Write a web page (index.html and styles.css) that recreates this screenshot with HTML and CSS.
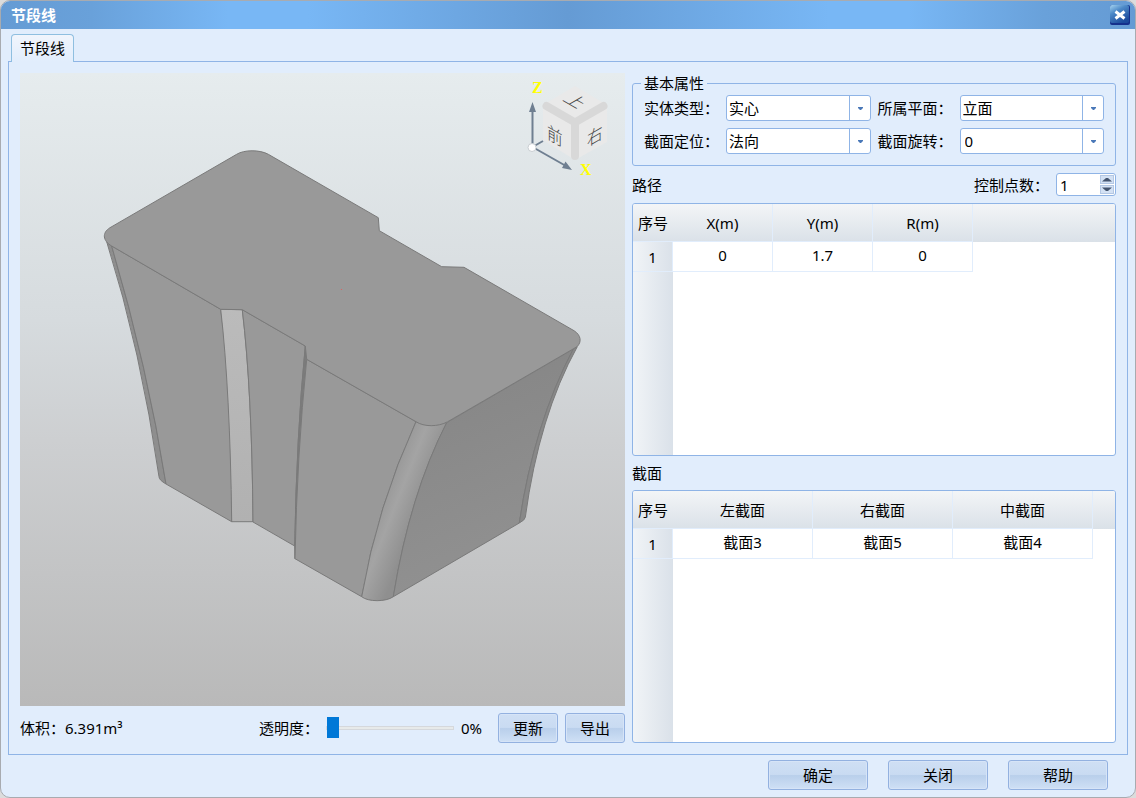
FILE: index.html
```html
<!DOCTYPE html>
<html lang="zh-CN">
<head>
<meta charset="utf-8">
<title>节段线</title>
<link rel="stylesheet" href="styles.css">
</head>
<body>
<main class="window">
  <header class="titlebar">
    <h1 class="title">节段线</h1>
    <button class="close" type="button" aria-label="关闭窗口">
      <svg viewBox="0 0 20 20" width="20" height="20" aria-hidden="true">
        <defs>
          <linearGradient id="closeFill" x1="0" y1="0" x2="0.6" y2="1">
            <stop offset="0" stop-color="#a5d3f0"/>
            <stop offset="0.4" stop-color="#4d8ac8"/>
            <stop offset="1" stop-color="#1c4a9c"/>
          </linearGradient>
        </defs>
        <rect width="20" height="20" rx="2" fill="#15308c"/>
        <rect width="19" height="18" rx="2" fill="url(#closeFill)"/>
        <path d="M5.500 6.500L14.500 13.500M14.500 6.500L5.500 13.500" stroke="#fff" stroke-width="3"/>
      </svg>
    </button>
  </header>

  <div class="tabs" role="tablist">
    <button class="tab" type="button" role="tab" aria-selected="true">节段线</button>
  </div>

  <section class="panel">
    <div class="preview">
      <div class="viewport">
        <svg class="scene" viewBox="20 73 605 633" role="img" aria-label="三维模型">
          <defs>
            <linearGradient id="roll" gradientUnits="userSpaceOnUse" x1="378" y1="505" x2="416" y2="520">
              <stop offset="0" stop-color="#979797"/>
              <stop offset="0.4" stop-color="#a4a4a4"/>
              <stop offset="1" stop-color="#8f8f8f"/>
            </linearGradient>
            <linearGradient id="side" x1="0.300" y1="0" x2="0.600" y2="1">
              <stop offset="0" stop-color="#858585"/>
              <stop offset="1" stop-color="#929292"/>
            </linearGradient>
            <linearGradient id="strip" x1="0" y1="0" x2="0" y2="1">
              <stop offset="0" stop-color="#bbbbbb"/>
              <stop offset="1" stop-color="#b1b1b1"/>
            </linearGradient>
          </defs>
          <g stroke="#7a7a7a" stroke-width="1" stroke-linejoin="round">
            <path fill="#8e8e8e" d="M106.700 241.700Q141 351 159 476.700Q159 480 166 484Q148 369 111.700 246Z"/>
            <path fill="#999" d="M111.700 246Q148 369 166 484L231.700 521.700Q232 390 220.700 309.300Z"/>
            <path fill="url(#strip)" d="M220.700 309.300Q230 390 231.700 521.700H253Q252 390 242.300 309.700Z"/>
            <path fill="#999" d="M242.300 309.700Q252 390 253 522L294.700 546Q296.600 434 305.300 346Z"/>
            <path fill="#7c7c7c" d="M305.300 346Q296.600 434 294.700 546L295 558.700Q297 455 306.700 359.300Z"/>
            <path fill="#999" d="M306.700 359.300Q297 455 295 558.700L361.700 596.700Q377 507 416 421.700Z"/>
            <path fill="url(#roll)" d="M416 421.700Q377 507 361.700 596.700C368 602 386 602 393.300 596.700Q410 494 446.700 422.700Z"/>
            <path fill="url(#side)" d="M446.700 422.700Q410 494 393.300 596.700L519.300 523Q534 424 573.300 349Z"/>
            <path fill="#888" d="M573.300 349Q534 424 519.300 523Q525 520 525.300 517.300Q539 416 577.300 346.700Z"/>
            <path fill="#999" d="M111.700 246C103 241 101.500 233 110 227.700L236.700 154.300C244 149.600 260 149.600 268.300 154.300L378.300 217.700L379.300 230.700L441.700 266.700L464 267.300L574 330.700C581 335 582 342 577 346.700L447.700 421.700C438 427 424 427 416 421.700L306.700 359.300L305.300 346L242.300 309.700L220.700 309.300Z"/>
          </g>
          <path d="M341 289h1v1h-1z" fill="#e06060"/>

          <g class="cube">
            <path fill="#e9e9e9" d="M575 86L607 105V142L575 160L543 140V105Z"/>
            <path d="M546.500 106L575 122.500L603.500 106M575 122.500V156" fill="none" stroke="#d8d8d8" stroke-width="8" stroke-linecap="round"/>
            <text class="face" transform="matrix(0.870 0.500 -0.870 0.500 562 100)">上</text>
            <text class="face" transform="matrix(0.870 0.500 0 1 547 138)">前</text>
            <text class="face" transform="matrix(0.870 -0.500 0 1 587 147)">右</text>
          </g>
          <g stroke="#6f7f91" stroke-width="2" fill="#6f7f91">
            <path d="M532.500 147V110M532.500 147L566 166M532.500 147L543 141"/>
            <path stroke="none" d="M532.500 102L529 112H536ZM572 170L562 168L565.500 161.500Z"/>
          </g>
          <circle cx="532" cy="147.500" r="4" fill="#fff" stroke="#c9ced2"/>
          <text class="axis" x="532" y="93">Z</text>
          <text class="axis" x="580" y="175">X</text>
        </svg>
      </div>
      <div class="status">
        <output class="volume">体积：6.391m³</output>
        <label for="opacity">透明度：</label>
        <input class="slider" id="opacity" type="range" min="0" max="100" value="0">
        <output class="percent" for="opacity">0%</output>
        <button class="btn btn-small" type="button">更新</button>
        <button class="btn btn-small" type="button">导出</button>
      </div>
    </div>

    <div class="props">
      <fieldset class="group">
        <legend>基本属性</legend>
        <div class="fields">
          <div class="field"><label for="type">实体类型：</label><select id="type"><option>实心</option></select></div>
          <div class="field"><label for="plane">所属平面：</label><select id="plane"><option>立面</option></select></div>
          <div class="field"><label for="anchor">截面定位：</label><select id="anchor"><option>法向</option></select></div>
          <div class="field"><label for="rotate">截面旋转：</label><select class="numeric" id="rotate"><option>0</option></select></div>
        </div>
      </fieldset>

      <div class="path-bar">
        <h2 class="caption">路径</h2>
        <label for="points">控制点数：</label>
        <div class="spin">
          <input id="points" type="number" value="1">
          <div class="steps">
            <button type="button" aria-label="增加"><svg viewBox="0 0 12 7" aria-hidden="true"><path d="M1 5.500L5 2H7L11 5.500Z"/></svg></button>
            <button type="button" aria-label="减少"><svg viewBox="0 0 12 7" aria-hidden="true"><path d="M1 1.500L5 5H7L11 1.500Z"/></svg></button>
          </div>
        </div>
      </div>

      <div class="grid-box">
        <table class="grid grid-path">
          <colgroup><col class="c-index"><col class="c-data"><col class="c-data"><col class="c-data"><col></colgroup>
          <thead><tr><th>序号</th><th>X(m)</th><th>Y(m)</th><th>R(m)</th><td class="rest"></td></tr></thead>
          <tbody><tr><th>1</th><td>0</td><td>1.7</td><td>0</td><td class="rest"></td></tr></tbody>
        </table>
      </div>

      <h2 class="caption caption-section">截面</h2>

      <div class="grid-box">
        <table class="grid grid-section">
          <colgroup><col class="c-index"><col class="c-data"><col class="c-data"><col class="c-data"><col></colgroup>
          <thead><tr><th>序号</th><th>左截面</th><th>右截面</th><th>中截面</th><td class="rest"></td></tr></thead>
          <tbody><tr><th>1</th><td>截面3</td><td>截面5</td><td>截面4</td><td class="rest"></td></tr></tbody>
        </table>
      </div>
    </div>
  </section>

  <footer class="actions">
    <button class="btn" type="button">确定</button>
    <button class="btn" type="button">关闭</button>
    <button class="btn" type="button">帮助</button>
  </footer>
</main>
</body>
</html>
```

FILE: styles.css
```css
:root {
  --line: #8fb4e6;
  --soft: #e1edfc;
  --bg: #e1edfc;
}

* {
  box-sizing: border-box;
}

body {
  margin: 0;
  background: #dcdcdc;
}

body,
button,
input,
select {
  font: 15px/20px "Noto Sans", "Noto Sans CJK SC", sans-serif;
  color: #000;
}

button {
  padding: 0;
}

h1,
h2 {
  margin: 0;
  font-size: 15px;
  font-weight: 400;
}

.window {
  display: flex;
  flex-direction: column;
  min-height: 100vh;
  border: 1px solid #a8abb0;
  border-radius: 10px;
  background: var(--bg);
  overflow: hidden;
}

.titlebar {
  display: flex;
  align-items: center;
  justify-content: space-between;
  height: 28px;
  padding: 0 5px 0 10px;
  background: linear-gradient(90deg, #659bd4 0%, #69a1da 8%, #78b7f5 20%, #78b7f5 27%, #659bd4 50%, #78b7f5 73%, #78b7f5 80%, #69a1da 92%, #659bd4 100%);
}

.title {
  color: #fff;
  font-weight: 700;
}

.close {
  display: flex;
  border: 0;
  background: none;
}

.tabs {
  display: flex;
  padding: 5px 10px 0;
}

.tab {
  z-index: 1;
  width: 63px;
  height: 28px;
  margin-bottom: -1px;
  padding-bottom: 2px;
  border: 1px solid #8fbfe0;
  border-bottom: 0;
  border-radius: 4px 4px 0 0;
  background: linear-gradient(#f1f5fc, #e1edfc);
}

.panel {
  flex: 1;
  display: grid;
  grid-template-columns: 605fr 484fr;
  gap: 7px;
  margin: 0 7px;
  padding: 11px;
  border: 1px solid var(--line);
}

.preview,
.props {
  display: flex;
  flex-direction: column;
  min-width: 0;
}

.viewport {
  flex: 1;
  display: flex;
  min-height: 300px;
  background: linear-gradient(#e6ecee 0%, #d6dbde 39%, #cdcfd1 58%, #b9b9b9 100%);
}

.scene {
  flex: 1;
  width: 100%;
}

.face {
  font: 18px "Noto Sans CJK SC", sans-serif;
  font-weight: 300;
  fill: #444;
}

.axis {
  font: 700 16px "Liberation Serif", serif;
  fill: #ff0;
}

.status {
  display: flex;
  align-items: center;
  gap: 7px;
  padding-top: 7px;
}

.volume {
  margin-right: auto;
}

.percent {
  width: 30px;
}

.slider {
  appearance: none;
  width: 128px;
  height: 21px;
  margin: 0;
  background: none;
}

.slider::-webkit-slider-runnable-track {
  height: 4px;
  border: 1px solid #d5d8dc;
  background: #e7eaea;
}

.slider::-webkit-slider-thumb {
  appearance: none;
  width: 12px;
  height: 21px;
  margin-top: -10px;
  background: #0078d7;
}

.btn {
  width: 100px;
  height: 30px;
  border: 1px solid #93b1e0;
  border-radius: 3px;
  background: linear-gradient(#cfdff4 0%, #c9dbf2 48%, #b9cfeb 52%, #cfe0f5 100%);
  box-shadow: inset 0 0 0 1px #d6e4f7;
}

.btn-small {
  width: 60px;
}

.group {
  min-width: 0;
  margin: 0 0 7px;
  padding: 2px 8px 11px;
  border: 1px solid var(--line);
  border-radius: 3px;
}

.group legend {
  padding: 0 3px;
}

.fields {
  display: grid;
  grid-template-columns: 1fr 1fr;
  gap: 7px;
  padding: 0 3px;
}

.field {
  display: flex;
  align-items: center;
}

.field label {
  width: 82px;
}

.field select {
  appearance: none;
  flex: 1;
  min-width: 0;
  height: 26px;
  padding: 0 22px 0 2px;
  border: 1px solid var(--line);
  border-radius: 3px;
  background:
    url("data:image/svg+xml,%3Csvg xmlns='http://www.w3.org/2000/svg' width='5' height='3'%3E%3Cpath d='M0 0h5v1L3 3H2L0 1z' fill='%234a78b8'/%3E%3C/svg%3E") right 7px center no-repeat,
    linear-gradient(var(--line), var(--line)) right 20px center / 1px 100% no-repeat,
    #fff;
}

.field .numeric {
  padding-left: 4px;
}

.path-bar {
  display: flex;
  align-items: center;
  height: 23px;
  margin-bottom: 7px;
}

.caption {
  margin-right: auto;
}

.caption-section {
  padding: 7px 0;
}

.spin {
  display: flex;
  width: 60px;
  height: 23px;
  margin-left: 7px;
  padding: 1px;
  border: 1px solid var(--line);
  border-radius: 3px;
  background: #fff;
}

.spin input {
  appearance: textfield;
  flex: 1;
  min-width: 0;
  padding: 0 2px;
  border: 0;
  background: none;
}

.spin input::-webkit-inner-spin-button {
  appearance: none;
  margin: 0;
}

.steps {
  display: grid;
  gap: 1px;
  width: 14px;
}

.steps button {
  display: flex;
  height: 9px;
  border: 1px solid #b4c8e4;
  background: #d3e1f4;
}

.steps svg {
  flex: 1;
  fill: #44546e;
}

.grid-box {
  flex: 1;
  border: 1px solid var(--line);
  border-radius: 3px;
  background: linear-gradient(90deg, #f1f4f7, #dae1e9) left / 40px 100% no-repeat, #fff;
  overflow: hidden;
}

.grid {
  width: 100%;
  table-layout: fixed;
  border-collapse: separate;
  border-spacing: 0;
}

.c-index {
  width: 40px;
}

.grid-path .c-data {
  width: 100px;
}

.grid-section .c-data {
  width: 140px;
}

.grid th,
.grid td {
  padding: 0;
  border-right: 1px solid var(--soft);
  border-bottom: 1px solid var(--soft);
  text-align: center;
  font-weight: 400;
}

.grid thead tr {
  height: 38px;
  background: linear-gradient(#f3f5f7, #dae1e8);
}

.grid tbody tr {
  height: 30px;
}

.grid tbody td {
  padding-bottom: 4px;
}

.grid thead th:first-child {
  border-right: 0;
}

.grid .rest {
  border: 0;
}

.actions {
  display: flex;
  justify-content: flex-end;
  gap: 20px;
  padding: 5px 27px 7px;
}
```
